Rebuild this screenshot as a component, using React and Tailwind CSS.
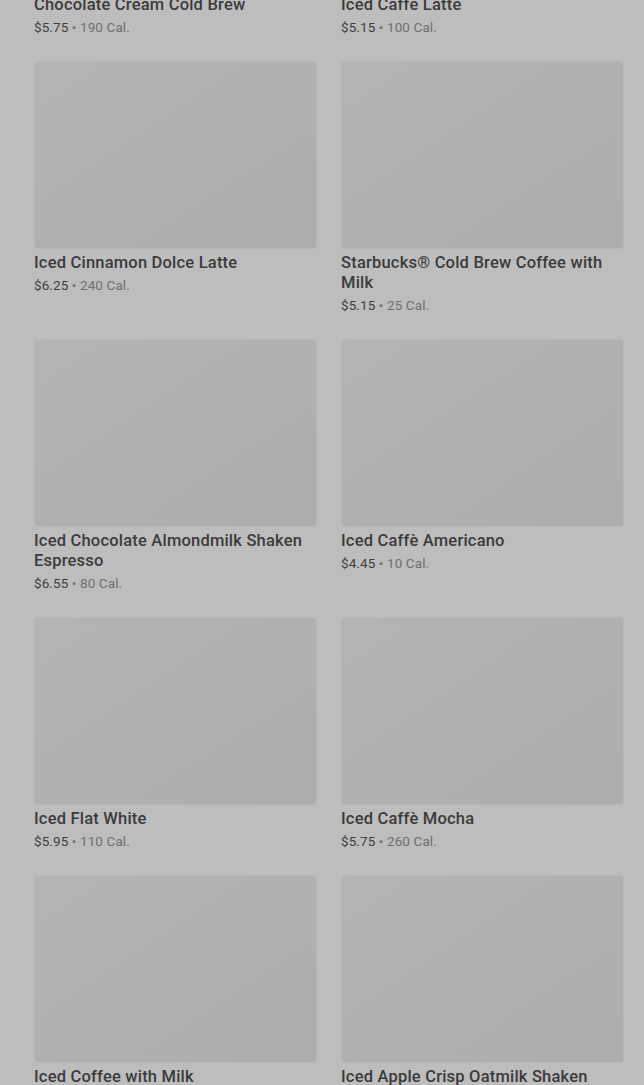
const items = [
  { name: 'Chocolate Cream Cold Brew', price: '$5.75', cal: '190 Cal.' },
  { name: 'Iced Caffè Latte', price: '$5.15', cal: '100 Cal.' },
  { name: 'Iced Cinnamon Dolce Latte', price: '$6.25', cal: '240 Cal.' },
  { name: 'Starbucks® Cold Brew Coffee with Milk', price: '$5.15', cal: '25 Cal.' },
  { name: 'Iced Chocolate Almondmilk Shaken Espresso', price: '$6.55', cal: '80 Cal.' },
  { name: 'Iced Caffè Americano', price: '$4.45', cal: '10 Cal.' },
  { name: 'Iced Flat White', price: '$5.95', cal: '110 Cal.' },
  { name: 'Iced Caffè Mocha', price: '$5.75', cal: '260 Cal.' },
  { name: 'Iced Coffee with Milk', price: '$3.95', cal: '80 Cal.' },
  { name: 'Iced Apple Crisp Oatmilk Shaken Espresso', price: '$6.25', cal: '140 Cal.' },
];

const MenuCard = ({ item }) => {
  return (
    <div>
      {/* image placeholder */}
      <div className="h-[188px] rounded-sm border border-[#b7b7b7] bg-gradient-to-br from-[#b4b4b4] via-[#b0b0b0] to-[#adadad]" />
      <h3 className="mt-[4px] text-[16.5px] leading-5 font-medium tracking-[0.2px] text-[#3b3b3b]">{item.name}</h3>
      <p className="mt-[2px] text-[13.5px] leading-5 tracking-[0.1px] text-[#3f3f3f]">
        {item.price}
        <span className="text-[#6f6f6f]"> • {item.cal}</span>
      </p>
    </div>
  );
};

const App = () => {
  return (
    <div className="h-[1085px] overflow-hidden bg-[#bdbdbd] font-['Roboto',sans-serif]">
      <div className="-mt-[197px] grid grid-cols-2 gap-x-6 gap-y-6 pl-[34px] pr-[20px]">
        {items.map((item) => (
          <MenuCard key={item.name} item={item} />
        ))}
      </div>
    </div>
  );
};

export default App;
